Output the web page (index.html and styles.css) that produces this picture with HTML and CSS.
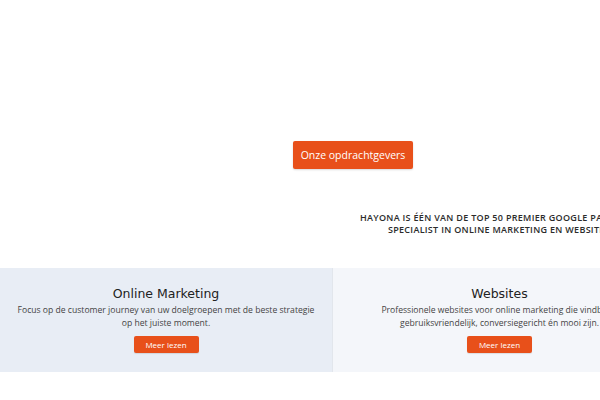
FILE: index.html
```html
<!DOCTYPE html>
<html lang="nl">
<head>
    <meta charset="UTF-8">
    <meta name="viewport" content="width=device-width, initial-scale=1.0">
    <title>Hayona</title>
    <link rel="stylesheet" href="styles.css">
</head>
<body>
    <div class="page">
        <section class="hero">
            <div class="hero-action">
                <a class="btn btn-large" href="#">Onze opdrachtgevers</a>
            </div>
            <h3 class="partner-line">
                Hayona is één van de top 50 Premier Google Partners<br>
                specialist in online marketing en websites
            </h3>
        </section>

        <section class="services">
            <div class="service service-marketing">
                <h2>Online Marketing</h2>
                <p>Focus op de customer journey van uw doelgroepen met de beste strategie op het juiste moment.</p>
                <a class="btn btn-small" href="#">Meer lezen</a>
            </div>
            <div class="service service-websites">
                <h2>Websites</h2>
                <p>Professionele websites voor online marketing die vindbaar, gebruiksvriendelijk, conversiegericht én mooi zijn.</p>
                <a class="btn btn-small" href="#">Meer lezen</a>
            </div>
        </section>
    </div>
</body>
</html>
```

FILE: styles.css
```css
* {
    margin: 0;
    padding: 0;
    box-sizing: border-box;
}

body {
    background: #ffffff;
    font-family: 'Open Sans', sans-serif;
    color: #333333;
    overflow: hidden;
}

.page {
    width: 666px;
}

.hero {
    height: 268px;
    padding-top: 141px;
}

.hero-action {
    padding-left: 293px;
}

.btn {
    display: inline-block;
    background: #e8501a;
    color: #ffffff;
    text-decoration: none;
    border-radius: 2px;
    text-align: center;
}

.btn-large {
    width: 120px;
    height: 28px;
    line-height: 28px;
    font-size: 10.5px;
    box-shadow: 0 1px 2px rgba(0, 0, 0, 0.15);
}

.btn-small {
    width: 65px;
    height: 17px;
    line-height: 17px;
    font-size: 8px;
    box-shadow: 0 1px 1px rgba(0, 0, 0, 0.1);
}

.partner-line {
    margin-top: 43px;
    margin-left: 360px;
    width: max-content;
    text-align: center;
    text-transform: uppercase;
    font-family: 'Open Sans', sans-serif;
    font-weight: 600;
    font-size: 9px;
    line-height: 12px;
    color: #2b2b2b;
    letter-spacing: 0.3px;
}

.services {
    display: flex;
    height: 104px;
}

.service {
    width: 333px;
    text-align: center;
    padding: 18px 14px 0;
}

.service-marketing {
    background: #e8edf5;
    border-right: 1px solid #e2e6ec;
}

.service-websites {
    background: #f4f6fa;
    padding-left: 40px;
    padding-right: 40px;
}

.service h2 {
    font-family: 'DejaVu Sans', sans-serif;
    font-weight: normal;
    font-size: 12.5px;
    line-height: 16px;
    color: #222222;
    margin-bottom: 2px;
}

.service p {
    font-size: 8.6px;
    line-height: 13px;
    color: #444444;
    margin-bottom: 1px;
}
```
